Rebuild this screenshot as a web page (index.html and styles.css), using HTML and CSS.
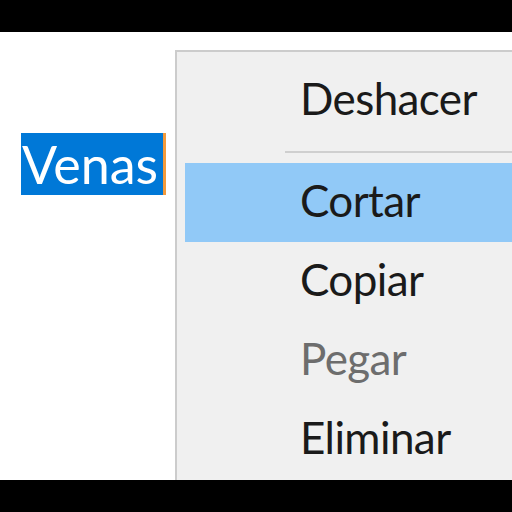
FILE: index.html
```html
<!DOCTYPE html>
<html lang="es">
<head>
<meta charset="utf-8">
<title>Menú contextual</title>
<link rel="stylesheet" href="styles.css">
</head>
<body>
<div class="bar"></div>
<main class="stage">
  <div class="field">
    <span class="selection">Venas</span><span class="caret"></span>
  </div>
  <nav class="menu">
    <div class="item">Deshacer</div>
    <div class="sep"></div>
    <div class="item hover">Cortar</div>
    <div class="item">Copiar</div>
    <div class="item disabled">Pegar</div>
    <div class="item">Eliminar</div>
  </nav>
</main>
<div class="bar"></div>
</body>
</html>
```
FILE: styles.css
```css
html, body {
  margin: 0;
  padding: 0;
  background: #000;
}
body {
  width: 512px;
  height: 512px;
  display: flex;
  flex-direction: column;
  font-family: Lato, "Noto Sans", sans-serif;
  overflow: hidden;
}
.bar {
  height: 32px;
  flex: none;
  background: #000;
}
.stage {
  height: 448px;
  flex: none;
  background: #fff;
  display: flex;
  overflow: hidden;
}
.field {
  width: 175px;
  flex: none;
  padding: 101px 0 0 21px;
  box-sizing: border-box;
  display: flex;
  align-items: flex-start;
}
.selection {
  display: block;
  height: 62px;
  width: 142px;
  box-sizing: border-box;
  padding-left: 1px;
  background: #0078d7;
  color: #fff;
  font-size: 52px;
  line-height: 62px;
  letter-spacing: 0;
  white-space: nowrap;
  overflow: hidden;
}
.caret {
  display: block;
  width: 3px;
  height: 62px;
  background: #f39a3c;
}
.menu {
  flex: 1;
  margin-top: 18px;
  background: #f0f0f0;
  border-top: 2px solid #cccccc;
  border-left: 2px solid #cccccc;
  padding: 9px 0 0 8px;
  display: flex;
  flex-direction: column;
}
.item {
  height: 79px;
  flex: none;
  padding-left: 115px;
  font-size: 44px;
  line-height: 74px;
  color: #1a1a1a;
  letter-spacing: -0.6px;
}
.item.hover {
  background: #91c9f7;
}
.item.disabled {
  color: #6d6d6d;
}
.sep {
  height: 23px;
  flex: none;
  margin-left: 100px;
  display: flex;
  align-items: center;
}
.sep::before {
  content: "";
  display: block;
  width: 100%;
  height: 2px;
  background: #cfcfcf;
}
```
